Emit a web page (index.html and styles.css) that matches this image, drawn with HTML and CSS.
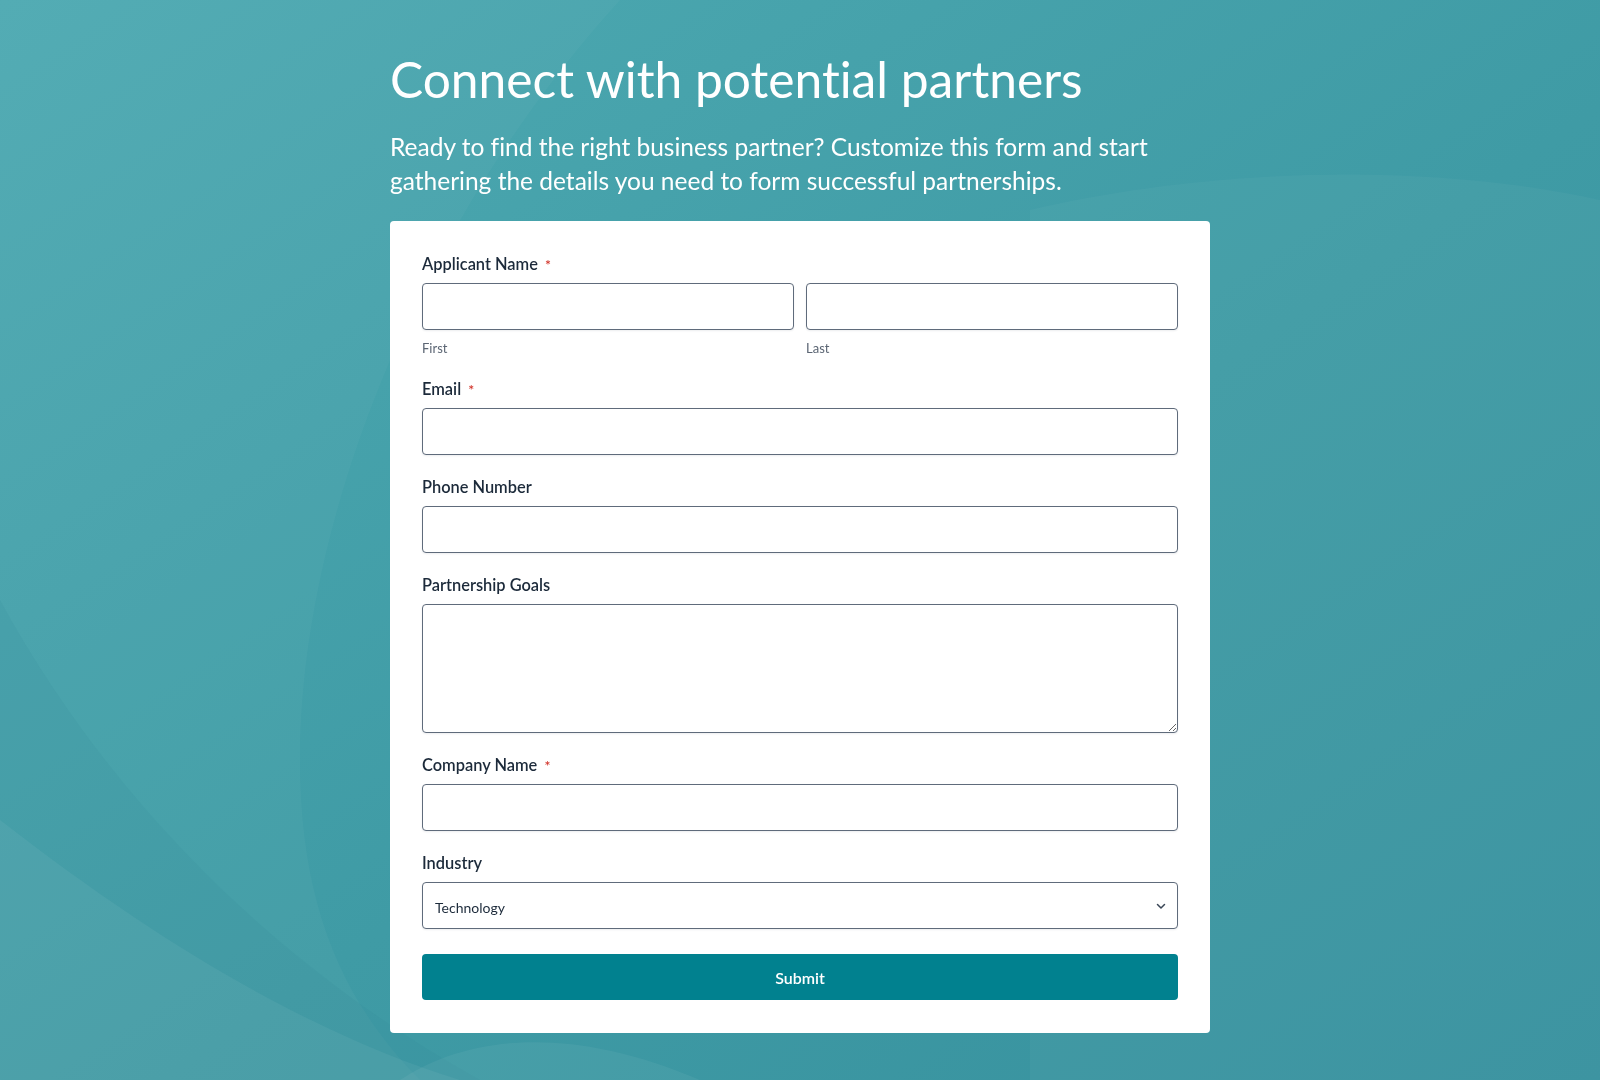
FILE: index.html
```html
<!DOCTYPE html>
<html lang="en">
<head>
    <meta charset="UTF-8">
    <meta name="viewport" content="width=device-width, initial-scale=1.0">
    <title>Connect with potential partners</title>
    <link rel="stylesheet" href="styles.css">
</head>
<body>
    <svg class="backdrop" viewBox="0 0 1600 1080" preserveAspectRatio="none" aria-hidden="true">
        <defs>
            <linearGradient id="bg" x1="0" y1="0" x2="1" y2="1">
                <stop offset="0" stop-color="#4eaab2"/>
                <stop offset="0.55" stop-color="#3f9ba5"/>
                <stop offset="1" stop-color="#37919e"/>
            </linearGradient>
        </defs>
        <rect width="1600" height="1080" fill="url(#bg)"/>
        <path d="M0 0 H620 C420 220 300 520 300 760 C300 900 340 1000 420 1080 H0 Z" fill="#ffffff" opacity="0.03"/>
        <path d="M0 600 C120 820 300 980 480 1080 H0 Z" fill="#2f8390" opacity="0.12"/>
        <path d="M0 820 C180 960 330 1040 460 1080 H0 Z" fill="#ffffff" opacity="0.05"/>
        <path d="M1030 210 C1200 170 1420 160 1600 200 V1080 H1030 Z" fill="#ffffff" opacity="0.03"/>
        <path d="M400 1080 C460 1040 560 1020 700 1080 Z" fill="#ffffff" opacity="0.05"/>
    </svg>

    <main class="page">
        <h1 class="title">Connect with potential partners</h1>
        <p class="intro">Ready to find the right business partner? Customize this form and start gathering the details you need to form successful partnerships.</p>

        <form class="card" onsubmit="return false">
            <div class="field">
                <label class="label">Applicant Name <span class="req">*</span></label>
                <div class="name-row">
                    <div class="name-part">
                        <input type="text" class="input">
                        <span class="hint">First</span>
                    </div>
                    <div class="name-part">
                        <input type="text" class="input">
                        <span class="hint">Last</span>
                    </div>
                </div>
            </div>

            <div class="field">
                <label class="label">Email <span class="req">*</span></label>
                <input type="email" class="input">
            </div>

            <div class="field">
                <label class="label">Phone Number</label>
                <input type="tel" class="input">
            </div>

            <div class="field">
                <label class="label">Partnership Goals</label>
                <textarea class="input textarea"></textarea>
            </div>

            <div class="field">
                <label class="label">Company Name <span class="req">*</span></label>
                <input type="text" class="input">
            </div>

            <div class="field">
                <label class="label">Industry</label>
                <div class="select-wrap">
                    <select class="input select">
                        <option>Technology</option>
                        <option>Finance</option>
                        <option>Healthcare</option>
                        <option>Retail</option>
                    </select>
                    <svg class="chevron" viewBox="0 0 12 12" aria-hidden="true">
                        <path d="M2.5 4.5 L6 8 L9.5 4.5" fill="none" stroke="#3a4656" stroke-width="1.5" stroke-linecap="round" stroke-linejoin="round"/>
                    </svg>
                </div>
            </div>

            <button type="submit" class="submit">Submit</button>
        </form>
    </main>
</body>
</html>
```

FILE: styles.css
```css
html, body {
    margin: 0;
    padding: 0;
}
body {
    font-family: Lato, "Open Sans", sans-serif;
    font-variant-ligatures: no-common-ligatures;
    background: #3f9ba5;
    min-height: 1080px;
    overflow: hidden;
}
.backdrop {
    position: fixed;
    top: 0;
    left: 0;
    width: 100%;
    height: 100%;
    z-index: -1;
}
.page {
    width: 820px;
    margin: 0 auto;
    padding-top: 48px;
}
.title {
    margin: 0;
    color: #ffffff;
    font-size: 49.7px;
    font-weight: 400;
    line-height: 62px;
}
.intro {
    margin: 20px 0 23px;
    color: #ffffff;
    font-size: 24.5px;
    line-height: 34px;
    max-width: 790px;
}
.card {
    background: #ffffff;
    border-radius: 4px;
    padding: 31px 32px 33px;
    display: flex;
    flex-direction: column;
}
.field {
    display: flex;
    flex-direction: column;
    margin-bottom: 20px;
}
.label {
    color: #1c2a3a;
    font-size: 16.4px;
    font-weight: 600;
    line-height: 24px;
    height: 24px;
    margin-bottom: 7px;
}
.req {
    color: #d2342a;
    font-size: 14px;
    line-height: 1;
    margin-left: 3px;
}
.name-row {
    display: grid;
    grid-template-columns: 1fr 1fr;
    gap: 12px;
}
.name-part {
    display: flex;
    flex-direction: column;
}
.hint {
    color: #5b6573;
    font-size: 13px;
    line-height: 18px;
    margin-top: 9px;
}
.input {
    box-sizing: border-box;
    width: 100%;
    height: 47px;
    border: 1px solid #5f6b7b;
    border-radius: 4px;
    background: #ffffff;
    box-shadow: 0 1px 2px rgba(15, 30, 50, 0.08);
    font-family: inherit;
    font-size: 14px;
    color: #1c2a3a;
    padding: 0 12px;
    margin: 0;
}
.textarea {
    height: 129px;
    padding: 10px 12px;
    resize: vertical;
}
.select-wrap {
    position: relative;
}
.select {
    appearance: none;
    -webkit-appearance: none;
    padding-top: 3px;
}
.chevron {
    position: absolute;
    right: 11px;
    top: 18px;
    width: 12px;
    height: 12px;
    pointer-events: none;
}
.submit {
    margin-top: 5px;
    height: 46px;
    border: none;
    border-radius: 4px;
    background: #01818f;
    color: #ffffff;
    font-family: inherit;
    font-size: 16px;
    font-weight: 600;
    cursor: pointer;
}
```
